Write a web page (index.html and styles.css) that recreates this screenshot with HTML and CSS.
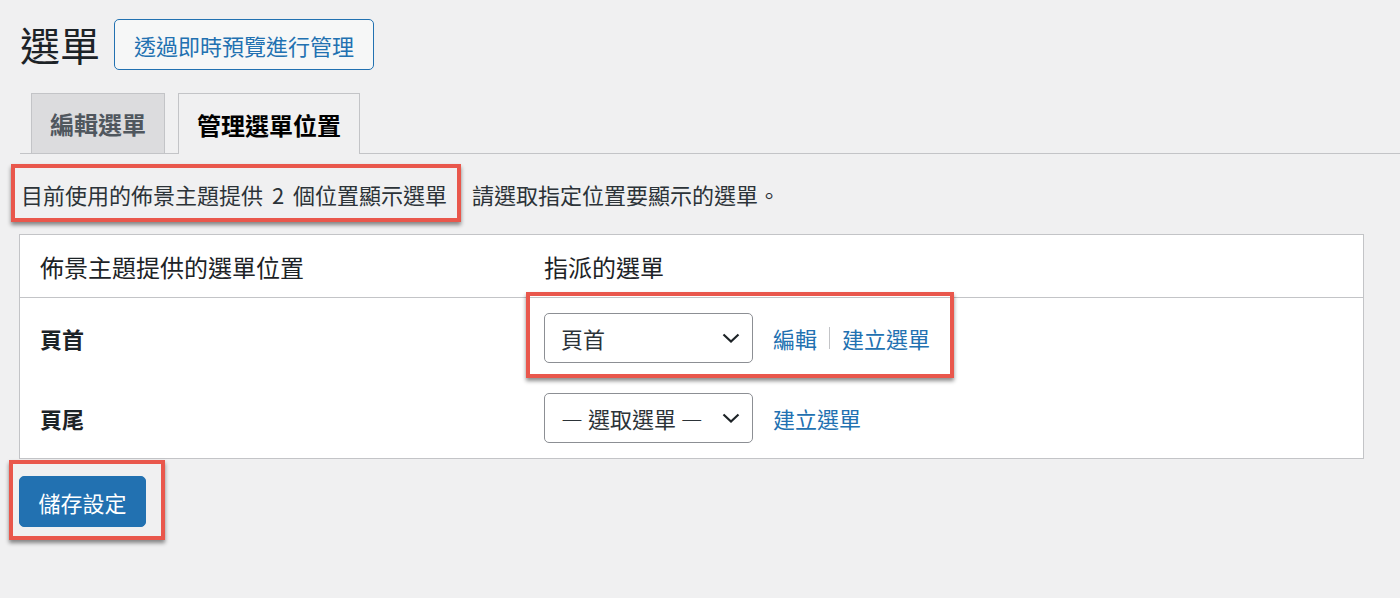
FILE: index.html
```html
<!DOCTYPE html>
<html lang="zh-Hant">
<head>
<meta charset="utf-8">
<title>選單</title>
<link rel="stylesheet" href="styles.css">
</head>
<body>
<div class="wrap">
  <div class="head">
    <h1 class="title">選單</h1>
    <a class="btn-outline">透過即時預覽進行管理</a>
  </div>
  <nav class="tabs">
    <a class="tab">編輯選單</a>
    <a class="tab tab-active">管理選單位置</a>
  </nav>
  <p class="intro"><span class="lead">目前使用的佈景主題提供 2 個位置顯示選單</span><span>請選取指定位置要顯示的選單。</span></p>
  <div class="table">
    <div class="row row-head">
      <div class="cell c1">佈景主題提供的選單位置</div>
      <div class="cell c2">指派的選單</div>
    </div>
    <div class="row">
      <div class="cell c1 label">頁首</div>
      <div class="cell c2">
        <div class="select"><span>頁首</span><svg class="chev" width="18" height="10" viewBox="0 0 18 10"><path d="M1.5 1.5 L9 8.5 L16.5 1.5" fill="none" stroke="#1d2327" stroke-width="2.2"/></svg></div>
        <div class="links"><a class="link">編輯</a><span class="sep"></span><a class="link">建立選單</a></div>
      </div>
    </div>
    <div class="row">
      <div class="cell c1 label">頁尾</div>
      <div class="cell c2">
        <div class="select"><span>— 選取選單 —</span><svg class="chev" width="18" height="10" viewBox="0 0 18 10"><path d="M1.5 1.5 L9 8.5 L16.5 1.5" fill="none" stroke="#1d2327" stroke-width="2.2"/></svg></div>
        <div class="links"><a class="link">建立選單</a></div>
      </div>
    </div>
  </div>
  <button class="btn-primary">儲存設定</button>
</div>
<div class="mark mark-1"></div>
<div class="mark mark-2"></div>
<div class="mark mark-3"></div>
</body>
</html>
```
FILE: styles.css
```css
html, body {
  margin: 0;
  padding: 0;
  background: #f0f0f1;
  font-family: "Noto Sans CJK TC", "Noto Sans", sans-serif;
  color: #1d2327;
  overflow: hidden;
}
.wrap {
  padding: 19px 36px 0 20px;
}
.head {
  display: flex;
  align-items: center;
  gap: 14px;
  height: 51px;
}
.title {
  margin: 0;
  font-size: 40px;
  font-weight: 400;
  line-height: 51px;
  color: #1d2327;
}
.btn-outline {
  display: flex;
  align-items: center;
  box-sizing: border-box;
  height: 51px;
  padding: 0 19px;
  border: 1.5px solid #2271b1;
  border-radius: 5px;
  background: #f6f7f7;
  color: #2271b1;
  font-size: 22px;
  line-height: 1;
}
.tabs {
  display: flex;
  gap: 13px;
  margin: 23px -36px 0 0;
  padding-left: 11px;
  border-bottom: 1px solid #c3c4c7;
  height: 60px;
  align-items: flex-end;
}
.tab {
  box-sizing: border-box;
  height: 60px;
  display: flex;
  align-items: center;
  padding: 0 18px;
  border: 1px solid #c3c4c7;
  border-bottom: none;
  background: #dcdcde;
  color: #50575e;
  font-size: 24px;
  font-weight: 700;
}
.tab-active {
  background: #f0f0f1;
  color: #000;
  height: 61px;
  margin-bottom: -1px;
}
.intro {
  display: flex;
  gap: 25px;
  margin: 25px 0 0 1px;
  font-size: 22px;
  line-height: 30px;
  color: #2c3338;
}
.lead {
  word-spacing: 4px;
}
.table {
  margin-top: 25px;
  margin-left: -1px;
  background: #fff;
  border: 1px solid #c3c4c7;
}
.row {
  display: flex;
  align-items: center;
  height: 80px;
}
.row-head {
  height: 62px;
  border-bottom: 1px solid #c3c4c7;
  font-size: 24px;
}
.cell {
  box-sizing: border-box;
  padding-left: 20px;
}
.c1 {
  width: 504px;
}
.c2 {
  display: flex;
  align-items: center;
  gap: 20px;
}
.label {
  font-size: 22px;
  font-weight: 700;
}
.select {
  box-sizing: border-box;
  width: 209px;
  height: 50px;
  border: 1px solid #8c8f94;
  border-radius: 5px;
  display: flex;
  align-items: center;
  justify-content: space-between;
  padding: 0 12px 0 16px;
  font-size: 22px;
  color: #2c3338;
  background: #fff;
}
.chev {
  display: block;
}
.links {
  display: flex;
  align-items: center;
}
.link {
  color: #2271b1;
  font-size: 22px;
}
.sep {
  width: 1px;
  height: 22px;
  background: #c3c4c7;
  margin: 0 12px 0 12px;
}
.btn-primary {
  display: block;
  margin-top: 17px;
  margin-left: -1px;
  width: 127px;
  height: 51px;
  border: 1px solid #2271b1;
  border-radius: 5px;
  background: #2271b1;
  color: #fff;
  font-family: inherit;
  font-size: 22px;
  padding: 0;
}
.mark {
  position: absolute;
  box-sizing: border-box;
  border: 4px solid #e9574c;
  box-shadow: 0 3px 4px rgba(0, 0, 0, 0.45);
}
.mark-1 { left: 11px; top: 164px; width: 450px; height: 58px; }
.mark-2 { left: 526px; top: 292px; width: 428px; height: 86px; }
.mark-3 { left: 9px; top: 460px; width: 156px; height: 80px; }
```
